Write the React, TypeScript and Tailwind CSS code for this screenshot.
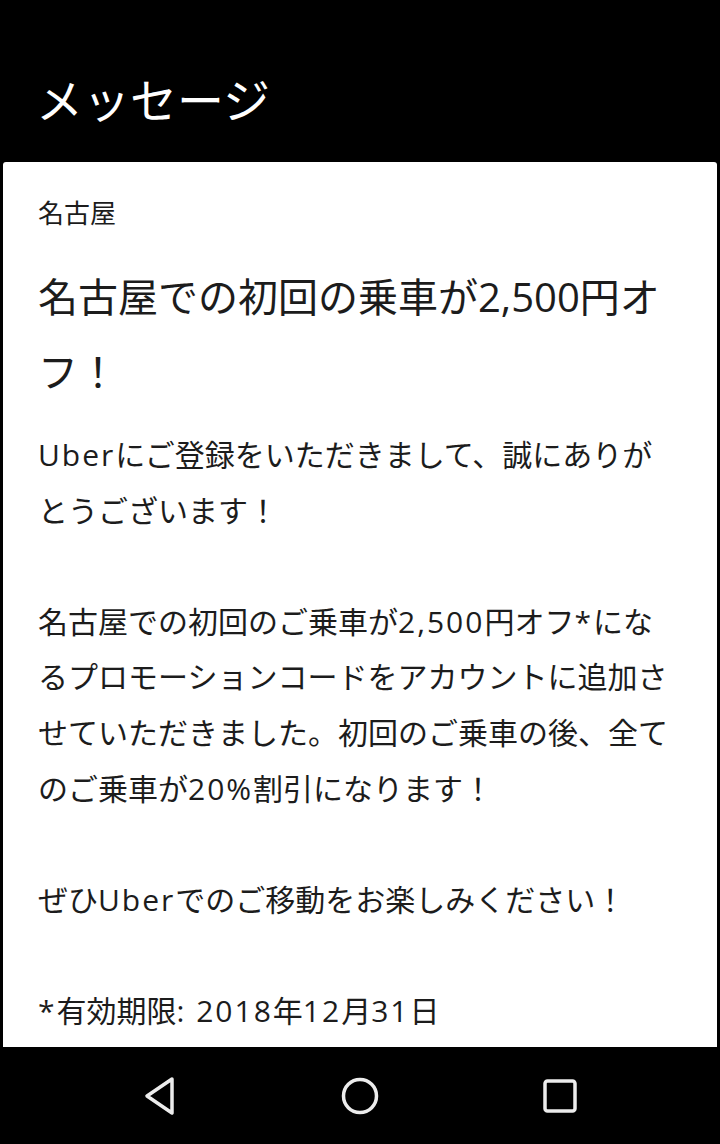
const FONT = '"Open Sans", "Noto Sans CJK JP", sans-serif'

// each entry is one rendered line; empty string is a blank line
const bodyLines = [
  'Uberにご登録をいただきまして、誠にありが',
  'とうございます！',
  '',
  '名古屋での初回のご乗車が2,500円オフ*にな',
  'るプロモーションコードをアカウントに追加さ',
  'せていただきました。初回のご乗車の後、全て',
  'のご乗車が20%割引になります！',
  '',
  'ぜひUberでのご移動をお楽しみください！',
  '',
  '*有効期限: 2018年12月31日',
]

// latin runs are set a little wider, as on the device
function Line({ text }: { text: string }) {
  const parts = text.split(/([\x20-\x7e]+)/).filter(Boolean)
  return (
    <div className="h-[55.6px]">
      {parts.map((p, i) =>
        /^[\x20-\x7e]+$/.test(p) ? (
          <span key={i} className="tracking-[2px]">
            {p}
          </span>
        ) : (
          <span key={i}>{p}</span>
        ),
      )}
    </div>
  )
}

function NavBar() {
  return (
    <div className="flex h-[97px] shrink-0 items-center justify-between bg-black px-[142px]">
      <svg width="36" height="40" viewBox="0 0 36 40" fill="none" aria-hidden>
        <path d="M30 3 L5 20 L30 37 Z" stroke="#ececec" strokeWidth="3.5" strokeLinejoin="round" />
      </svg>
      <svg width="40" height="40" viewBox="0 0 40 40" fill="none" aria-hidden>
        <circle cx="20" cy="20" r="16.5" stroke="#ececec" strokeWidth="3.5" />
      </svg>
      <svg width="36" height="36" viewBox="0 0 36 36" fill="none" aria-hidden>
        <rect x="3" y="3" width="30" height="30" rx="2.5" stroke="#ececec" strokeWidth="3.5" />
      </svg>
    </div>
  )
}

export default function App() {
  return (
    <div className="flex h-[1144px] w-[720px] flex-col overflow-hidden bg-black" style={{ fontFamily: FONT }}>
      <header className="flex h-[162px] shrink-0 items-center px-[36px] pt-[38px]">
        <h1 className="text-[47px] leading-none font-normal text-white">メッセージ</h1>
      </header>

      <main className="mx-[3px] flex-1 overflow-hidden rounded-t-[3px] bg-white px-[35px] pt-[33px] text-[#1c1c1c]">
        <p className="text-[26px] leading-[36px]">名古屋</p>

        <h2 className="mt-[28px] text-[40px] leading-[75px] font-normal whitespace-nowrap">
          名古屋での初回の乗車が2,500円オ
          <br />
          フ！
        </h2>

        <div className="mt-[18px] text-[30px] leading-[55.6px] whitespace-nowrap">
          {bodyLines.map((line, i) => (
            <Line key={i} text={line} />
          ))}
        </div>
      </main>

      <NavBar />
    </div>
  )
}
